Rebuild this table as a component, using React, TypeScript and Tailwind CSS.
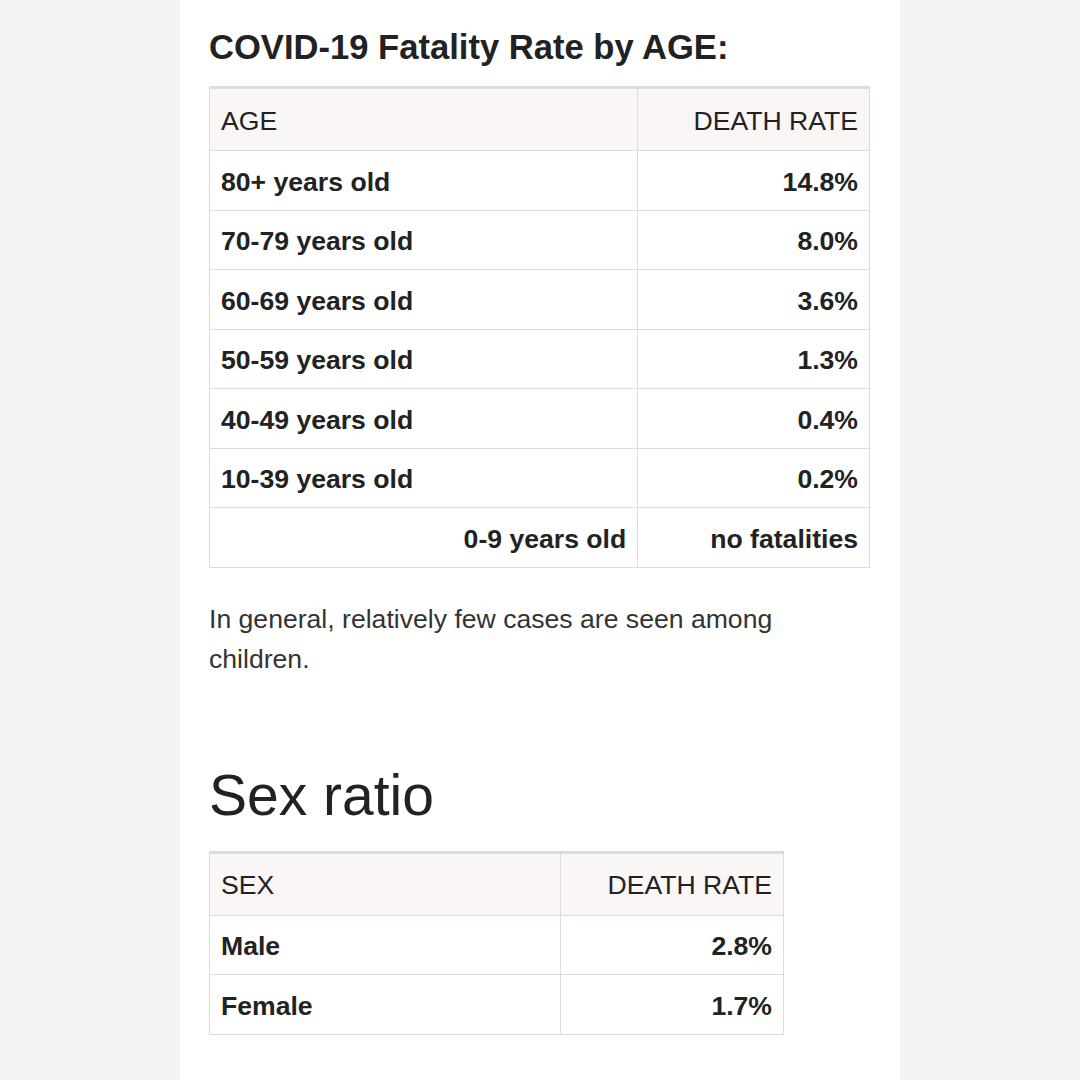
import React from "react";

const ageRows: [string, string][] = [
  ["80+ years old", "14.8%"],
  ["70-79 years old", "8.0%"],
  ["60-69 years old", "3.6%"],
  ["50-59 years old", "1.3%"],
  ["40-49 years old", "0.4%"],
  ["10-39 years old", "0.2%"],
];

export default function App() {
  return (
    <div
      className="min-h-[1080px] w-full bg-[#f2f2f2] text-[#222]"
      style={{ fontFamily: '"Liberation Sans", Arial, Helvetica, sans-serif' }}
    >
      <div className="mx-auto min-h-[1080px] w-[720px] bg-white pl-[29px] pr-[30px] pt-[27px]">
        <h2 className="text-[34.6px] font-bold leading-[40px] text-[#222]">
          COVID-19 Fatality Rate by AGE:
        </h2>

        <table className="mt-[19px] w-[661px] border-collapse border border-t-[3px] border-[#dcdcdc] text-[26.6px] leading-[30px]">
          <colgroup>
            <col className="w-[429px]" />
            <col className="w-[232px]" />
          </colgroup>
          <thead>
            <tr className="h-[63px] bg-[#faf6f6]">
              <th className="border border-[#dcdcdc] px-[11px] pt-[2px] text-left font-normal">AGE</th>
              <th className="border border-[#dcdcdc] px-[11px] pt-[2px] text-right font-normal">DEATH RATE</th>
            </tr>
          </thead>
          <tbody>
            {ageRows.map(([a, r]) => (
              <tr key={a} className="h-[59.5px]">
                <td className="border border-[#dcdcdc] px-[11px] pt-[3px] text-left font-bold">{a}</td>
                <td className="border border-[#dcdcdc] px-[11px] pt-[3px] text-right font-bold">{r}</td>
              </tr>
            ))}
            <tr className="h-[59.5px]">
              <td className="border border-[#dcdcdc] px-[11px] pt-[3px] text-right font-bold">0-9 years old</td>
              <td className="border border-[#dcdcdc] px-[11px] pt-[3px] text-right font-bold">no fatalities</td>
            </tr>
          </tbody>
        </table>

        <p className="mt-[31px] text-[26.6px] leading-[40px] text-[#333]">
          In general, relatively few cases are seen among children.
        </p>

        <h2 className="mt-[82px] text-[57px] font-normal leading-[68px] text-[#222]">Sex ratio</h2>

        <table className="mt-[22px] w-[575px] border-collapse border border-t-[3px] border-[#dcdcdc] text-[26.6px] leading-[30px]">
          <colgroup>
            <col className="w-[352px]" />
            <col className="w-[223px]" />
          </colgroup>
          <thead>
            <tr className="h-[63px] bg-[#faf6f6]">
              <th className="border border-[#dcdcdc] px-[11px] pt-[2px] text-left font-normal">SEX</th>
              <th className="border border-[#dcdcdc] px-[11px] pt-[2px] text-right font-normal">DEATH RATE</th>
            </tr>
          </thead>
          <tbody>
            <tr className="h-[59.5px]">
              <td className="border border-[#dcdcdc] px-[11px] pt-[3px] text-left font-bold">Male</td>
              <td className="border border-[#dcdcdc] px-[11px] pt-[3px] text-right font-bold">2.8%</td>
            </tr>
            <tr className="h-[59.5px]">
              <td className="border border-[#dcdcdc] px-[11px] pt-[3px] text-left font-bold">Female</td>
              <td className="border border-[#dcdcdc] px-[11px] pt-[3px] text-right font-bold">1.7%</td>
            </tr>
          </tbody>
        </table>
      </div>
    </div>
  );
}
